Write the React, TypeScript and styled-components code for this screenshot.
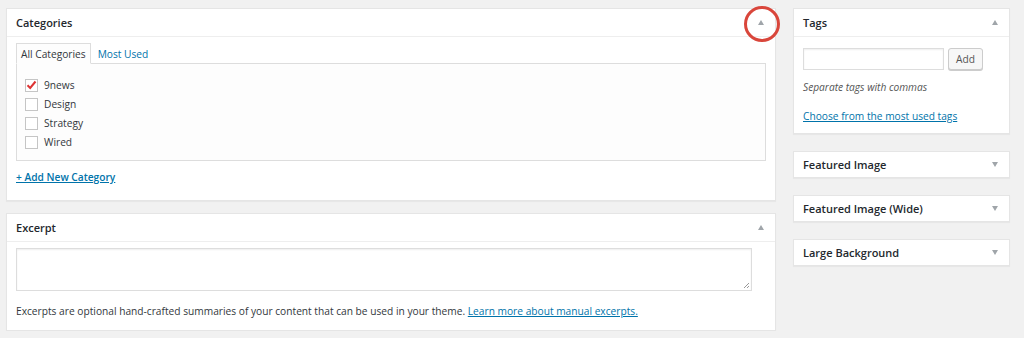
import React, { FC } from 'react';
import styled, { createGlobalStyle } from 'styled-components';

const GlobalStyle = createGlobalStyle`
  html, body {
    margin: 0;
    padding: 0;
    background: #f1f1f1;
    font-family: "Open Sans", "Noto Sans", sans-serif;
    color: #444;
  }
  * { box-sizing: border-box; }
`;

const Page = styled.div`
  display: grid;
  grid-template-columns: 770px 217px;
  column-gap: 17px;
  padding: 8px 0 0 6px;
  align-items: start;
`;

const Column = styled.div<{ gap: number }>`
  display: flex;
  flex-direction: column;
  gap: ${(p) => p.gap}px;
`;

const Box = styled.div`
  background: #fff;
  border: 1px solid #e5e5e5;
  box-shadow: 0 1px 1px rgba(0, 0, 0, 0.04);
`;

const BoxHeader = styled.div<{ open?: boolean }>`
  position: relative;
  height: ${(p) => (p.open ? 28 : 25)}px;
  display: flex;
  align-items: center;
  justify-content: space-between;
  padding: 0 11px 0 9px;
  border-bottom: ${(p) => (p.open ? '1px solid #eee' : 'none')};
  font-size: 11px;
  font-weight: 600;
  color: #23282d;
`;

const Arrow = styled.span<{ up?: boolean }>`
  width: 0;
  height: 0;
  border-left: 3.5px solid transparent;
  border-right: 3.5px solid transparent;
  ${(p) => (p.up ? 'border-bottom: 5px solid #a0a5aa;' : 'border-top: 5px solid #a0a5aa;')}
`;

// red highlight ring drawn over the toggle arrow
const Circle = styled.span`
  position: absolute;
  right: -5px;
  top: -3px;
  width: 36px;
  height: 36px;
  border: 3px solid #d9463b;
  border-radius: 50%;
`;

const Inside = styled.div<{ pad: string }>`
  padding: ${(p) => p.pad};
  font-size: 10.2px;
`;

const Tabs = styled.div`
  display: flex;
  align-items: flex-end;
  margin-bottom: -1px;
`;

const Tab = styled.div<{ active?: boolean }>`
  height: 21px;
  display: flex;
  align-items: center;
  font-size: 10.2px;
  ${(p) =>
    p.active
      ? 'border: 1px solid #ddd; border-bottom-color: #fdfdfd; background: #fdfdfd; color: #32373c; padding: 0 4px;'
      : 'color: #0073aa; padding: 0 7px;'}
`;

const TabPanel = styled.div`
  border: 1px solid #ddd;
  background: #fdfdfd;
  padding: 13px 8px 10px;
  display: flex;
  flex-direction: column;
  gap: 3px;
`;

const CheckRow = styled.label`
  display: flex;
  align-items: center;
  gap: 6px;
  height: 16px;
  font-size: 10.2px;
  color: #32373c;
`;

const CheckBox = styled.span`
  width: 13px;
  height: 13px;
  border: 1px solid #c5c5c5;
  background: #fff;
  display: flex;
  align-items: center;
  justify-content: center;
`;

const LinkText = styled.a`
  color: #0073aa;
  text-decoration: underline;
  font-size: 10.2px;
`;

const AddLink = styled.div`
  margin-top: 9px;
  font-weight: 600;
  line-height: 14px;
`;

const TextArea = styled.div`
  position: relative;
  height: 43px;
  border: 1px solid #ddd;
  box-shadow: inset 0 1px 2px rgba(0, 0, 0, 0.07);
  margin-right: 14px;
`;

const Grip = styled.svg`
  position: absolute;
  right: 1px;
  bottom: 1px;
`;

const Note = styled.p`
  margin: 13px 0 0;
  line-height: 14px;
  color: #32373c;
`;

const TagRow = styled.div`
  display: flex;
  gap: 4px;
`;

const Input = styled.div`
  width: 141px;
  height: 22px;
  border: 1px solid #ddd;
  box-shadow: inset 0 1px 2px rgba(0, 0, 0, 0.07);
`;

const Button = styled.div`
  width: 35px;
  height: 22px;
  border: 1px solid #ccc;
  border-radius: 3px;
  background: #f7f7f7;
  box-shadow: 0 1px 0 #ccc;
  display: flex;
  align-items: center;
  justify-content: center;
  font-size: 10.2px;
  color: #555;
`;

const Hint = styled.p`
  margin: 10px 0 0;
  line-height: 14px;
  font-style: italic;
  color: #555;
`;

const TagLink = styled.div`
  margin-top: 15px;
  line-height: 14px;
`;

const categories = [
  { name: '9news', checked: true },
  { name: 'Design', checked: false },
  { name: 'Strategy', checked: false },
  { name: 'Wired', checked: false },
];

const Check: FC = () => (
  <svg width="11" height="10" viewBox="0 0 11 10">
    <path d="M1.5 5.2 L4.2 8 L9.5 1.5" fill="none" stroke="#d33" strokeWidth="2" />
  </svg>
);

const App: FC = () => (
  <>
    <GlobalStyle />
    <Page>
      <Column gap={12}>
        <Box>
          <BoxHeader open>
            <span>Categories</span>
            <Arrow up />
            <Circle />
          </BoxHeader>
          <Inside pad="6px 9px 16px 9px">
            <Tabs>
              <Tab active>All Categories</Tab>
              <Tab>Most Used</Tab>
            </Tabs>
            <TabPanel>
              {categories.map((c) => (
                <CheckRow key={c.name}>
                  <CheckBox>{c.checked && <Check />}</CheckBox>
                  {c.name}
                </CheckRow>
              ))}
            </TabPanel>
            <AddLink>
              <LinkText>+ Add New Category</LinkText>
            </AddLink>
          </Inside>
        </Box>
        <Box>
          <BoxHeader open>
            <span>Excerpt</span>
            <Arrow up />
          </BoxHeader>
          <Inside pad="6px 9px 12px 9px">
            <TextArea>
              <Grip width="7" height="7" viewBox="0 0 7 7">
                <path d="M1 6 L6 1 M4 6 L6 4" stroke="#999" strokeWidth="1" />
              </Grip>
            </TextArea>
            <Note>
              Excerpts are optional hand-crafted summaries of your content that can be used in your theme.{' '}
              <LinkText>Learn more about manual excerpts.</LinkText>
            </Note>
          </Inside>
        </Box>
      </Column>
      <Column gap={17}>
        <Box>
          <BoxHeader open>
            <span>Tags</span>
            <Arrow up />
          </BoxHeader>
          <Inside pad="11px 9px 10px 9px">
            <TagRow>
              <Input />
              <Button>Add</Button>
            </TagRow>
            <Hint>Separate tags with commas</Hint>
            <TagLink>
              <LinkText>Choose from the most used tags</LinkText>
            </TagLink>
          </Inside>
        </Box>
        <Box>
          <BoxHeader>
            <span>Featured Image</span>
            <Arrow />
          </BoxHeader>
        </Box>
        <Box>
          <BoxHeader>
            <span>Featured Image (Wide)</span>
            <Arrow />
          </BoxHeader>
        </Box>
        <Box>
          <BoxHeader>
            <span>Large Background</span>
            <Arrow />
          </BoxHeader>
        </Box>
      </Column>
    </Page>
  </>
);

export default App;
